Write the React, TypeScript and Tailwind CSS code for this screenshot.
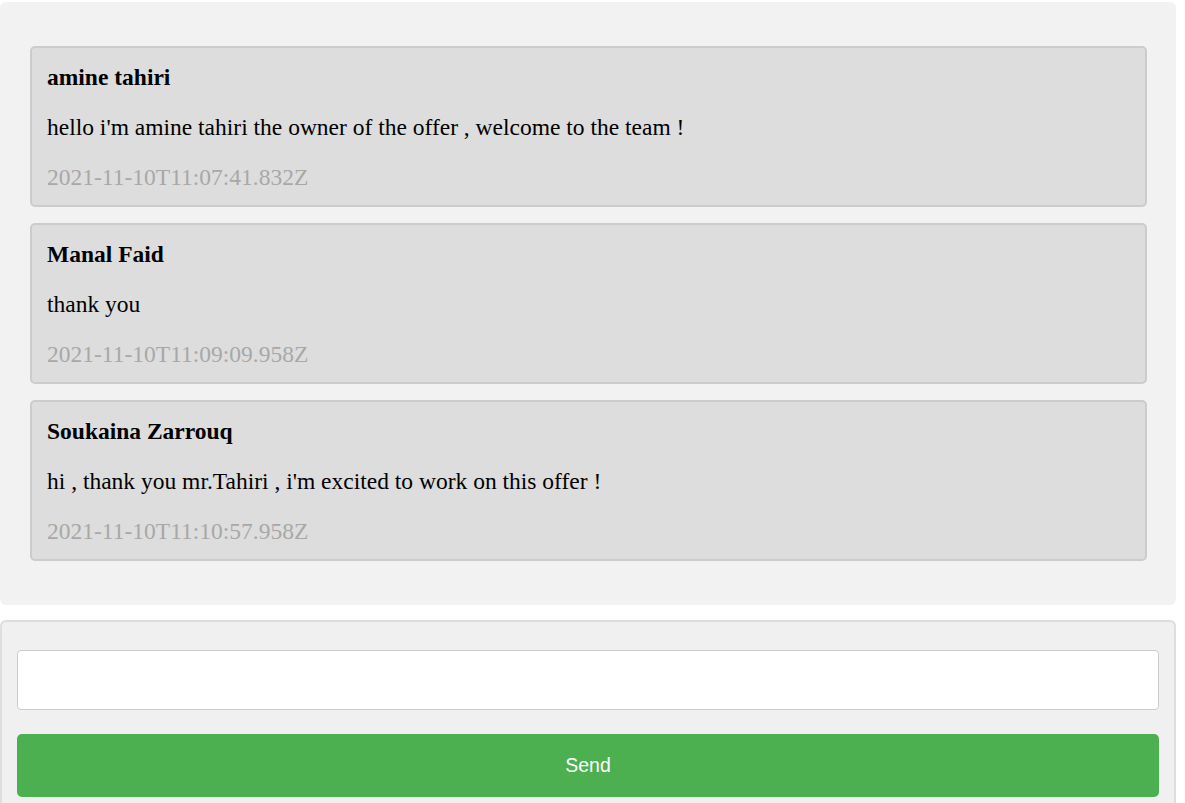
const messages = [
  {
    author: 'amine tahiri',
    text: "hello i'm amine tahiri the owner of the offer , welcome to the team !",
    date: '2021-11-10T11:07:41.832Z',
  },
  {
    author: 'Manal Faid',
    text: 'thank you',
    date: '2021-11-10T11:09:09.958Z',
  },
  {
    author: 'Soukaina Zarrouq',
    text: "hi , thank you mr.Tahiri , i'm excited to work on this offer !",
    date: '2021-11-10T11:10:57.958Z',
  },
]

function MessageCard({ author, text, date }: { author: string; text: string; date: string }) {
  return (
    <div className="flex flex-col gap-6 rounded-[5px] border-2 border-[#cccccc] bg-[#dddddd] pt-4 pb-[15px] pl-[15px] pr-4 text-[23.5px] leading-[26px]">
      <p className="font-bold text-black">{author}</p>
      <p className="text-black">{text}</p>
      <p className="text-[#a8a8a8]">{date}</p>
    </div>
  )
}

export default function App() {
  return (
    <div className="min-h-[803px] bg-white pt-[2px] font-['Liberation_Serif',serif]">
      {/* Messages */}
      <div className="flex w-[1176px] flex-col gap-4 rounded-[6px] bg-[#f2f2f2] pt-[44px] pb-[44px] pl-[30px] pr-[29px]">
        {messages.map((m) => (
          <MessageCard key={m.date} {...m} />
        ))}
      </div>

      {/* Composer */}
      <div className="mt-[15px] flex h-[200px] w-[1176px] flex-col gap-6 rounded-[6px] border-2 border-[#dedede] bg-[#f0f0f0] px-[15px] pt-[28px]">
        <input
          type="text"
          className="h-[60px] w-full rounded-[4px] border border-[#cccccc] bg-white px-3 outline-none"
        />
        <button className="h-[63px] w-full rounded-[5px] bg-[#4caf50] font-['Liberation_Sans',Arial,sans-serif] text-[19.5px] font-medium text-white">
          Send
        </button>
      </div>
    </div>
  )
}
